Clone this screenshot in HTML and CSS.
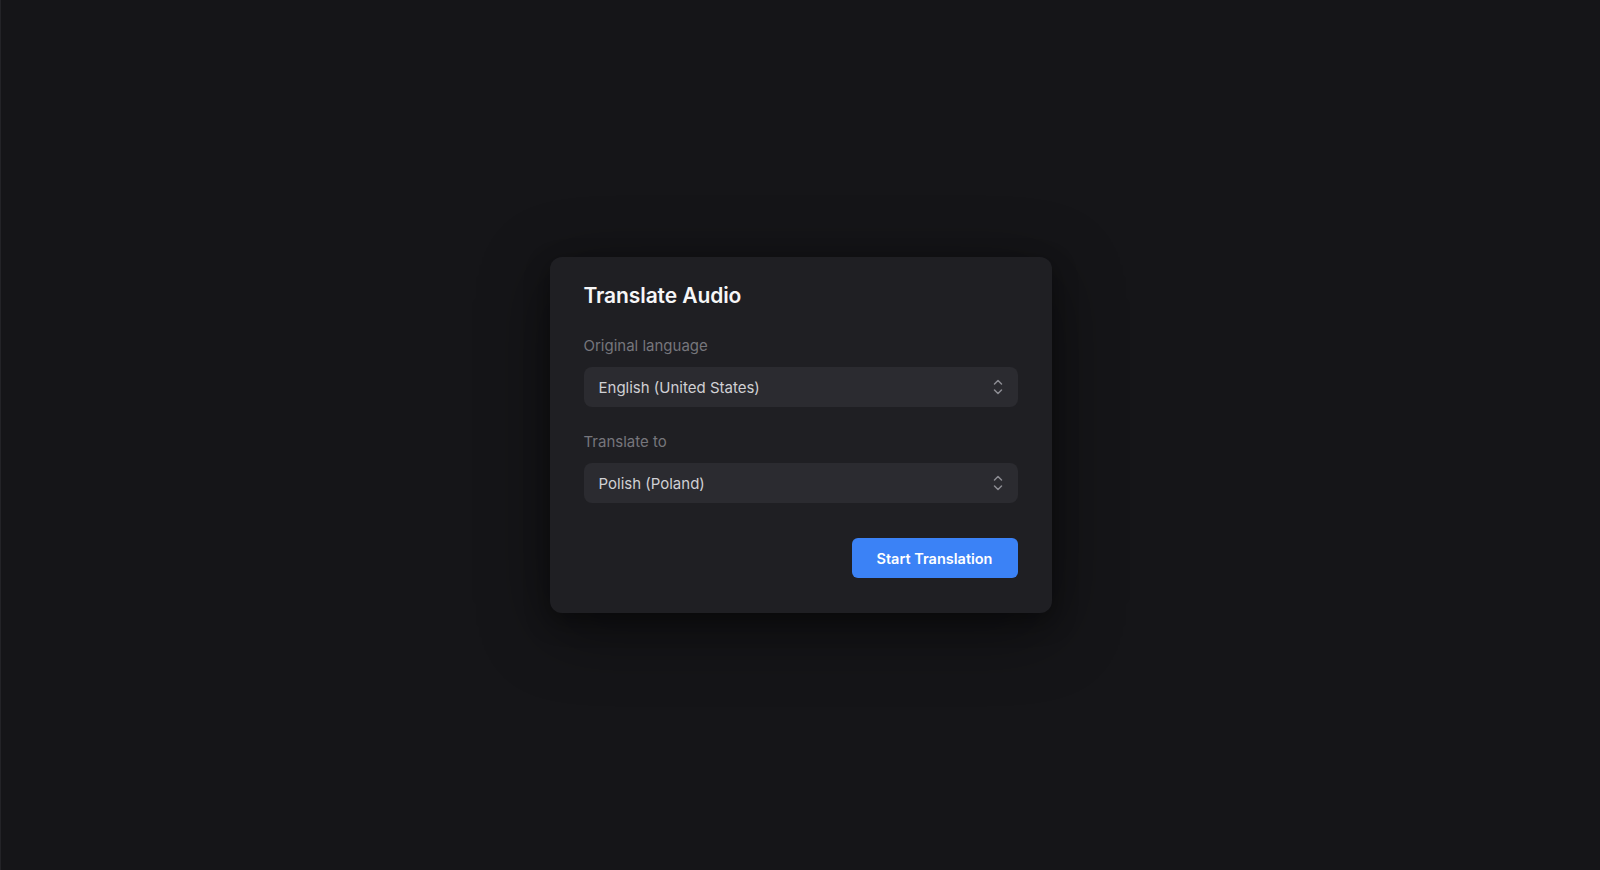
FILE: index.html
```html
<!DOCTYPE html>
<html lang="en">
<head>
<meta charset="utf-8">
<title>Translate Audio</title>
<link rel="stylesheet" href="styles.css">
</head>
<body>
<main class="page">
  <section class="card">
    <h1 class="title">Translate Audio</h1>
    <div class="field">
      <label class="label">Original language</label>
      <div class="select">
        <span class="select-value">English (United States)</span>
        <svg class="chevrons" width="12" height="18" viewBox="0 0 12 18" fill="none" stroke="currentColor" stroke-width="1.5" stroke-linecap="round" stroke-linejoin="round"><path d="M2.5 6 L6 2.5 L9.5 6"/><path d="M2.5 12 L6 15.5 L9.5 12"/></svg>
      </div>
    </div>
    <div class="field field-second">
      <label class="label">Translate to</label>
      <div class="select">
        <span class="select-value">Polish (Poland)</span>
        <svg class="chevrons" width="12" height="18" viewBox="0 0 12 18" fill="none" stroke="currentColor" stroke-width="1.5" stroke-linecap="round" stroke-linejoin="round"><path d="M2.5 6 L6 2.5 L9.5 6"/><path d="M2.5 12 L6 15.5 L9.5 12"/></svg>
      </div>
    </div>
    <div class="actions">
      <button class="btn-primary" type="button">Start Translation</button>
    </div>
  </section>
</main>
</body>
</html>
```
FILE: styles.css
```css
* { box-sizing: border-box; }
html, body { margin: 0; height: 100%; }
body {
  background: #151518;
  font-family: Inter, "Noto Sans", "Liberation Sans", sans-serif;
  border-left: 1px solid #232327;
}
.page {
  height: 100%;
  display: flex;
  align-items: center;
  justify-content: center;
}
.card {
  width: 502px;
  background: #1f1f23;
  border-radius: 12px;
  padding: 25px 34px 35px;
  box-shadow: 0 16px 70px rgba(0, 0, 0, 0.45), 0 8px 24px rgba(0, 0, 0, 0.35);
  display: flex;
  flex-direction: column;
}
.title {
  margin: 0;
  font-size: 21px;
  line-height: 28px;
  font-weight: 600;
  color: #f6f6f7;
  letter-spacing: -0.1px;
}
.field {
  margin-top: 26px;
  display: flex;
  flex-direction: column;
}
.field-second { margin-top: 25px; }
.label {
  font-size: 15px;
  line-height: 20px;
  color: #76767c;
}
.select {
  margin-top: 11px;
  height: 40px;
  background: #2b2b30;
  border-radius: 8px;
  display: flex;
  align-items: center;
  justify-content: space-between;
  padding: 0 14px 0 15px;
}
.select-value {
  font-size: 15px;
  color: #d0d0d4;
}
.chevrons { color: #8c8c92; display: block; }
.actions {
  margin-top: 35px;
  display: flex;
  justify-content: flex-end;
}
.btn-primary {
  height: 40px;
  width: 166px;
  border: none;
  border-radius: 6px;
  background: #3b82f6;
  color: #ffffff;
  font-family: inherit;
  font-size: 14.5px;
  font-weight: 600;
  cursor: pointer;
}
```
